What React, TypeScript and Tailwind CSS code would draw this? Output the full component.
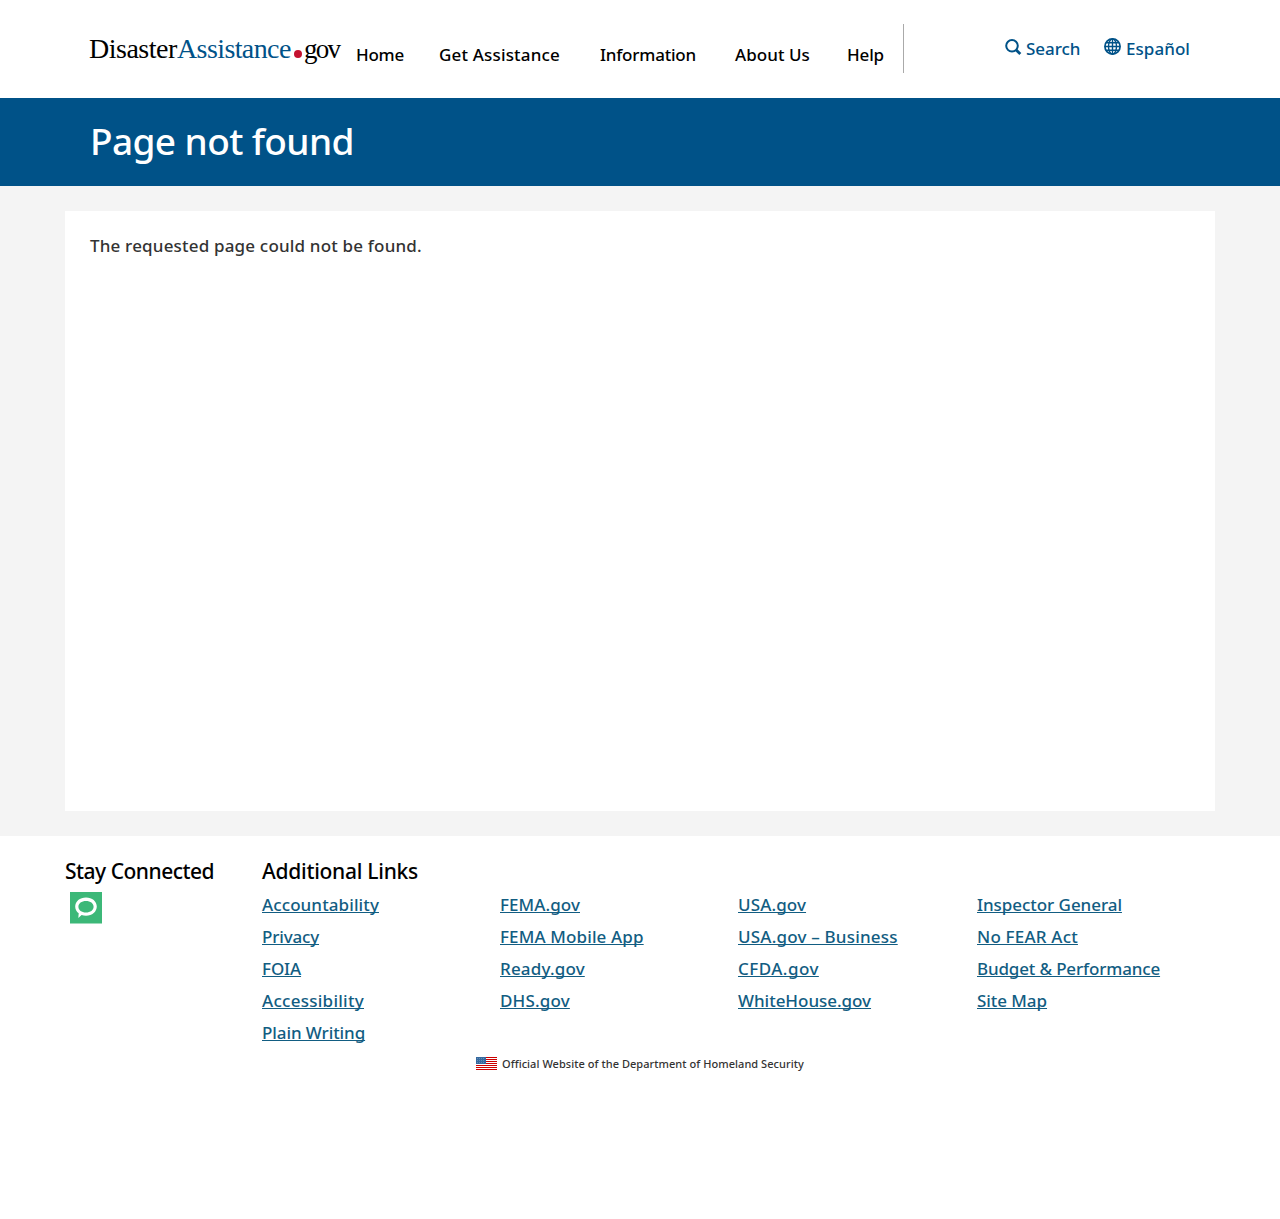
type Item = { label: string; className: string };

const nav: Item[] = [
  { label: 'Home', className: 'w-[83px] tracking-[-0.25px]' },
  { label: 'Get Assistance', className: 'w-[161px] tracking-[0.17px]' },
  { label: 'Information', className: 'w-[135px] tracking-[-0.21px]' },
  { label: 'About Us', className: 'w-[112px] tracking-[0.06px]' },
  { label: 'Help', className: 'tracking-[-0.15px]' },
];

const columns: Item[][] = [
  [
    { label: 'Accountability', className: 'tracking-[0.1px]' },
    { label: 'Privacy', className: 'tracking-[-0.16px]' },
    { label: 'FOIA', className: 'tracking-[-0.1px]' },
    { label: 'Accessibility', className: 'tracking-[0.27px]' },
    { label: 'Plain Writing', className: 'tracking-[-0.09px]' },
  ],
  [
    { label: 'FEMA.gov', className: 'tracking-[0.08px]' },
    { label: 'FEMA Mobile App', className: 'tracking-[0.13px]' },
    { label: 'Ready.gov', className: 'tracking-[0.17px]' },
    { label: 'DHS.gov', className: 'tracking-[0.17px]' },
  ],
  [
    { label: 'USA.gov', className: 'tracking-[0.12px]' },
    { label: 'USA.gov – Business', className: 'tracking-[0.2px]' },
    { label: 'CFDA.gov', className: 'tracking-[0.46px]' },
    { label: 'WhiteHouse.gov', className: 'tracking-[-0.03px]' },
  ],
  [
    { label: 'Inspector General', className: 'tracking-[-0.05px]' },
    { label: 'No FEAR Act', className: 'tracking-[0.2px]' },
    { label: 'Budget & Performance', className: 'tracking-[-0.15px]' },
    { label: 'Site Map', className: 'tracking-[-0.06px]' },
  ],
];

function Logo() {
  return (
    <a className="mt-[33px] -ml-px flex h-[32px] w-[267px] items-baseline whitespace-nowrap font-['Liberation_Serif'] text-[28px] leading-[32px] text-black">
      <span className="w-[88px] tracking-[-0.5px]">Disaster</span>
      <span className="w-[117px] tracking-[-0.6px] text-[#005288]">Assistance</span>
      <span className="mr-[2px] size-2 rounded-full bg-[#c41230]" />
      <span className="text-[27px] tracking-[-1.7px]">gov</span>
    </a>
  );
}

function SearchIcon() {
  return (
    <svg width="17" height="17" viewBox="0 0 17 17" fill="none" stroke="currentColor">
      <circle cx="7" cy="6.8" r="5.8" strokeWidth="2" />
      <path d="M11 10.800l4.300 4.300" strokeWidth="2.800" strokeLinecap="butt" />
    </svg>
  );
}

function GlobeIcon() {
  return (
    <svg width="17" height="17" viewBox="0 0 17 17" fill="none" stroke="currentColor" strokeWidth="1.4">
      <circle cx="8.5" cy="8.5" r="7.6" strokeWidth="1.7" />
      <ellipse cx="8.5" cy="8.5" rx="4" ry="7.6" />
      <path d="M8.5 1v15M1 8.5h15M2.2 4.7h12.6M2.2 12.3h12.6" />
    </svg>
  );
}

function ChatIcon() {
  return (
    <svg width="32" height="32" viewBox="0 0 32 32">
      <rect width="32" height="31.5" fill="#3cb878" />
      <path
        fillRule="evenodd"
        fill="#fff"
        d="M16 5.6c6.2 0 10.8 3.9 10.8 9s-4.600 9.200-10.800 9.200c-1.700 0-3.100-.2-4.400-.7L8.300 26l.4-4.700C6.400 19.700 5.200 17.500 5.200 14.600c0-5.100 4.600-9 10.800-9zM16 9c-4.400 0-7.600 2.400-7.600 5.700s3.200 5.800 7.600 5.800 7.600-2.500 7.600-5.800S20.400 9 16 9z"
      />
    </svg>
  );
}

function Flag() {
  return (
    <svg width="21" height="13" viewBox="0 0 21 13" shapeRendering="crispEdges">
      <rect width="21" height="13" fill="#fff" />
      {[0, 2, 4, 6, 8, 10, 12].map((y) => (
        <rect key={y} y={y} width="21" height="1" fill="#c00" />
      ))}
      <rect width="10" height="7" fill="#36699f" />
      {[1, 3, 5].map((y) =>
        [1, 3, 5, 7].map((x) => <rect key={`${x}-${y}`} x={x} y={y} width="1" height="1" fill="#5f8fb8" />),
      )}
    </svg>
  );
}

export default function App() {
  return (
    <div className="min-h-[1219px] bg-white font-['Noto_Sans',sans-serif] text-[17px] font-medium text-black">
      <header className="flex h-[98px] pl-[90px]">
        <Logo />
        <nav className="mt-[24px] flex h-[49px] w-[548px] border-r border-[#aaa] pt-[19px] leading-6 whitespace-nowrap">
          {nav.map((n) => (
            <a key={n.label} className={n.className}>{n.label}</a>
          ))}
        </nav>
        <div className="ml-[101px] flex pt-[37px] leading-6 text-[#005288]">
          <a className="flex w-[99px] gap-[4px]">
            <span className="mt-[2px]"><SearchIcon /></span>
            <span className="tracking-[-0.05px]">Search</span>
          </a>
          <a className="flex gap-[5px]">
            <span className="mt-px"><GlobeIcon /></span>
            <span className="tracking-[0.05px]">Español</span>
          </a>
        </div>
      </header>

      <div className="h-[88px] bg-[#005288] pt-[19px] pl-[90px]">
        <h1 className="text-[37px] leading-[48px] font-medium tracking-[-0.6px] text-white">Page not found</h1>
      </div>

      <main className="bg-[#f4f4f4] px-[65px] py-[25px]">
        <div className="h-[600px] bg-white px-[25px] pt-[23px]">
          <p className="leading-6 tracking-[0.18px] text-[#333]">The requested page could not be found.</p>
        </div>
      </main>

      <footer className="pt-[21px] pl-[65px]">
        <div className="flex">
          <section className="w-[197px]">
            <h2 className="text-[21px] leading-7 font-medium tracking-[-0.5px]">Stay Connected</h2>
            <a className="mt-[7px] ml-[5px] block w-8"><ChatIcon /></a>
          </section>
          <section>
            <h2 className="text-[21px] leading-7 font-medium tracking-[-0.27px]">Additional Links</h2>
            <div className="mt-[4px] grid grid-cols-[238px_238px_239px_200px]">
              {columns.map((links, i) => (
                <ul key={i}>
                  {links.map((l) => (
                    <li key={l.label} className="h-8 leading-8 whitespace-nowrap text-[#125d82]">
                      <a className={`underline decoration-1 underline-offset-1 [text-decoration-skip-ink:none] ${l.className}`}>
                        {l.label}
                      </a>
                    </li>
                  ))}
                </ul>
              ))}
            </div>
          </section>
        </div>
        <div className="mt-[7px] ml-[411px] flex gap-[5px] text-[11px] leading-4 tracking-[0.05px] text-[#333]">
          <span className="mt-px"><Flag /></span>
          <span>Official Website of the Department of Homeland Security</span>
        </div>
      </footer>
    </div>
  );
}
